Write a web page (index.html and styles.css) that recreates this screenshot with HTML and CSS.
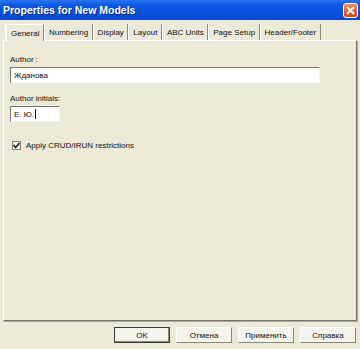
FILE: index.html
```html
<!DOCTYPE html>
<html lang="en">
<head>
<meta charset="UTF-8">
<title>Properties for New Models</title>
<link rel="stylesheet" href="styles.css">
</head>
<body>

<!-- Title bar -->
<div class="titlebar">
    <span class="title">Properties for New Models</span>
    <span class="close">
        <svg width="9" height="9" viewBox="0 0 9 9"><path d="M1 1 L8 8 M8 1 L1 8" stroke="#fff" stroke-width="1.8"/></svg>
    </span>
</div>

<!-- Tabs -->
<div class="tabs">
    <span class="tab active">General</span>
    <span class="tab">Numbering</span>
    <span class="tab">Display</span>
    <span class="tab">Layout</span>
    <span class="tab">ABC Units</span>
    <span class="tab">Page Setup</span>
    <span class="tab">Header/Footer</span>
</div>

<!-- Page -->
<div class="panel">
    <label class="field-label">Author :</label>
    <div class="input wide">Жданова</div>

    <label class="field-label second">Author initials:</label>
    <div class="input short">E. Ю.<span class="caret"></span></div>

    <div class="check-row">
        <span class="checkbox">
            <svg width="7" height="7" viewBox="0 0 7 7"><path d="M0.5 3 L2.5 5.5 L6.5 1" fill="none" stroke="#222" stroke-width="1.6"/></svg>
        </span>
        <span>Apply CRUD/IRUN restrictions</span>
    </div>
</div>

<!-- Buttons -->
<div class="buttons">
    <span class="btn default">OK</span>
    <span class="btn">Отмена</span>
    <span class="btn">Применить</span>
    <span class="btn">Справка</span>
</div>

</body>
</html>
```

FILE: styles.css
```css
/* XP style properties dialog */
body {
    margin: 0;
    width: 360px;
    height: 349px;
    background-color: #ece9d8;
    font-family: "Liberation Sans", Arial, sans-serif;
    font-size: 8px;
    color: #111;
    overflow: hidden;
}

.titlebar {
    height: 20px;
    display: flex;
    align-items: center;
    justify-content: space-between;
    padding: 0 2px 0 3px;
    background: linear-gradient(#2a74f0 0%, #0a56e0 30%, #0550dc 70%, #0a48c8 100%);
}

.title {
    color: #fff;
    font-weight: bold;
    font-size: 10.5px;
    text-shadow: 1px 1px 0 #0a2a80;
}

.close {
    width: 15px;
    height: 15px;
    box-sizing: border-box;
    border: 1px solid #fff;
    border-radius: 3px;
    background: linear-gradient(#f08a60, #d8431c);
    display: flex;
    align-items: center;
    justify-content: center;
}

.tabs {
    display: flex;
    margin-top: 4px;
    padding-left: 5px;
    height: 16px;
}

.tab {
    display: flex;
    align-items: center;
    padding: 0 3.5px 0 5px;
    border-right: 1px solid #8a877a;
    box-shadow: inset 1px 0 0 #fff;
}

.tab.active {
    background-color: #ece9d8;
    border-top: 1px solid #fff;
    border-left: 1px solid #fff;
    position: relative;
    margin-bottom: -1px;
    z-index: 1;
}

.panel {
    margin: 0 3px 0 3px;
    height: 281px;
    box-sizing: border-box;
    border-top: 1px solid #fff;
    border-left: 1px solid #fff;
    border-right: 1px solid #77756a;
    border-bottom: 1px solid #77756a;
    box-shadow: 1px 1px 0 #aca899;
    padding: 14px 0 0 6px;
}

.field-label {
    display: block;
    height: 12px;
}

.field-label.second {
    margin-top: 11px;
}

.input {
    background: #fff;
    height: 16px;
    box-sizing: border-box;
    border-top: 1px solid #7a786e;
    border-left: 1px solid #7a786e;
    border-right: 1px solid #f4f3ee;
    border-bottom: 1px solid #f4f3ee;
    display: flex;
    align-items: center;
    padding-left: 3px;
}

.input.wide {
    width: 310px;
}

.input.short {
    width: 50px;
}

.caret {
    width: 1px;
    height: 10px;
    background: #111;
    margin-left: 1px;
}

.check-row {
    display: flex;
    align-items: center;
    gap: 5px;
    margin-top: 19px;
    padding-left: 2px;
}

.checkbox {
    width: 9px;
    height: 9px;
    box-sizing: border-box;
    border: 1px solid #8a877a;
    background: #f4f3ee;
    display: flex;
    align-items: center;
    justify-content: center;
}

.buttons {
    display: flex;
    justify-content: flex-end;
    gap: 6px;
    margin-top: 6px;
    padding-right: 4px;
}

.btn {
    width: 56px;
    height: 16px;
    box-sizing: border-box;
    display: flex;
    align-items: center;
    justify-content: center;
    background: #f4f3ec;
    border-top: 1px solid #fff;
    border-left: 1px solid #fff;
    border-right: 1px solid #8a877a;
    border-bottom: 1px solid #8a877a;
}

.btn.default {
    border: 1px solid #3a3a36;
    box-shadow: inset -1px -1px 0 #8a877a;
}
```
